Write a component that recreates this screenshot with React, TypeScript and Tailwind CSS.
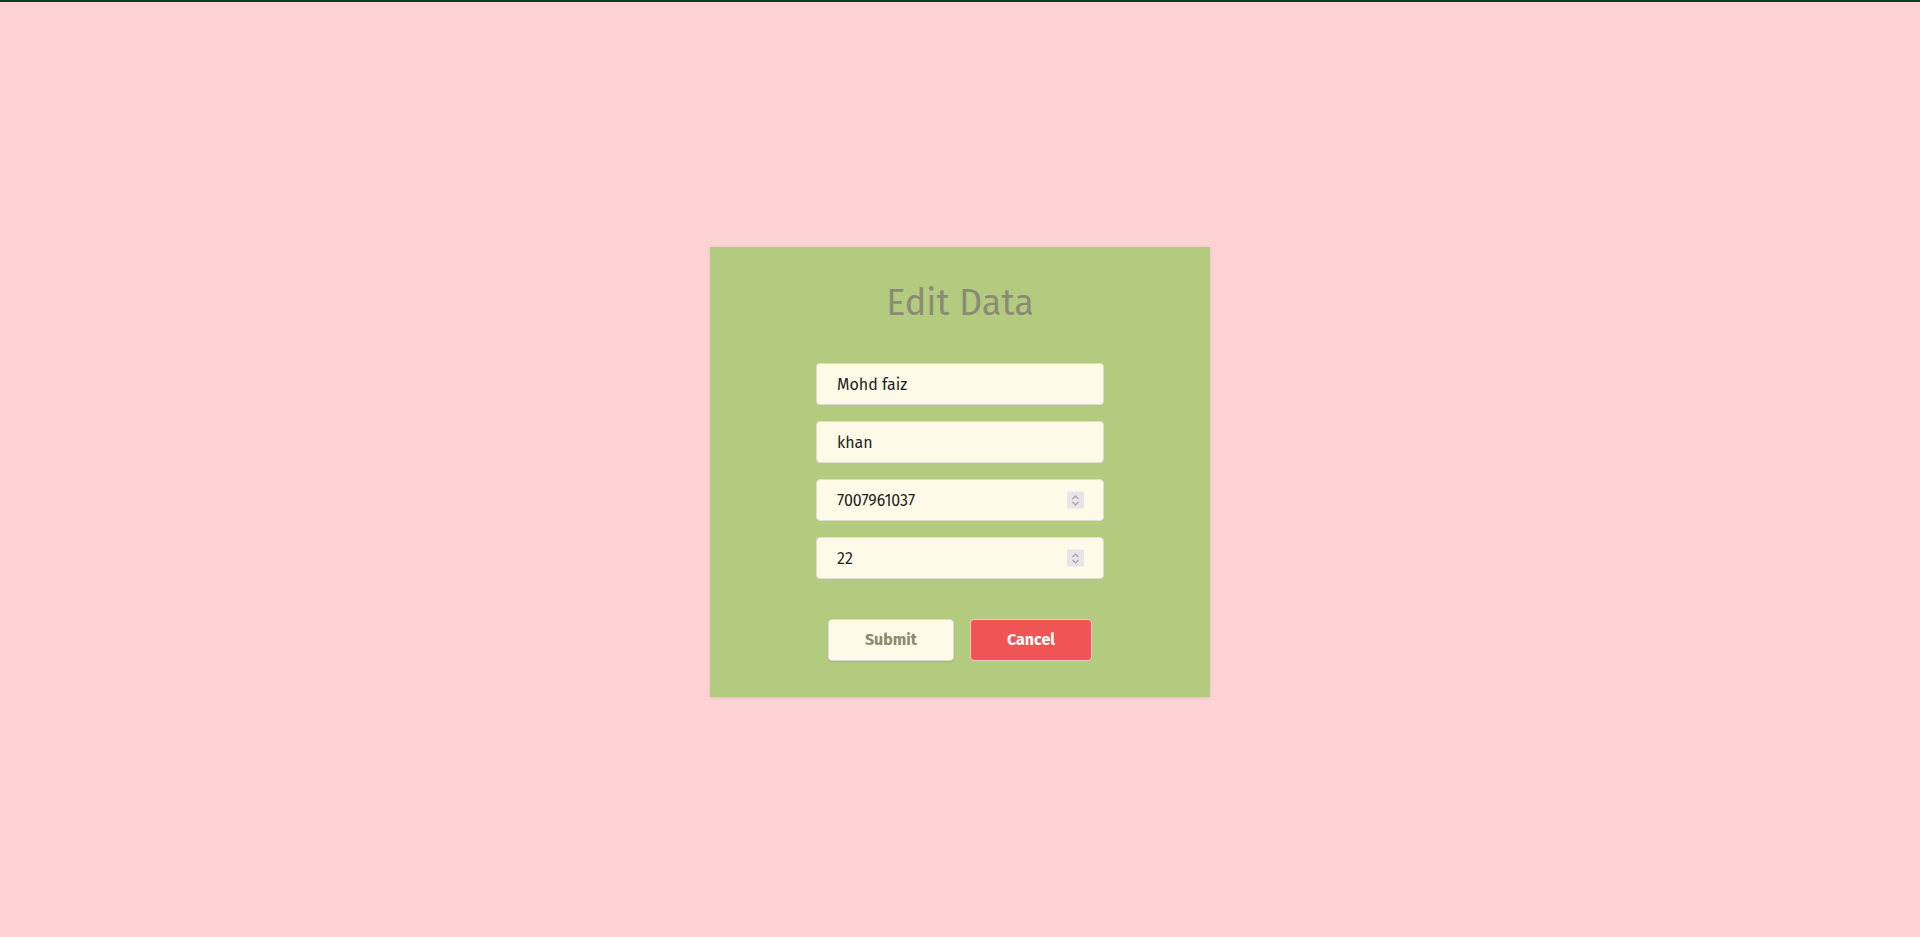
import React, { useState } from 'react';

const Spinner = () => (
  <span className="pointer-events-none absolute right-[20px] top-1/2 -translate-y-1/2 w-[17px] h-[17px] bg-[#e8e5e8] flex items-center justify-center">
    <svg width="9" height="12" viewBox="0 0 9 12" fill="none" stroke="#a19da3" strokeWidth="1.2">
      <path d="M1.5 4.5 L4.5 1.5 L7.5 4.5" />
      <path d="M1.5 7.5 L4.5 10.5 L7.5 7.5" />
    </svg>
  </span>
);

const EditData = () => {
  const [firstName, setFirstName] = useState('Mohd faiz');
  const [lastName, setLastName] = useState('khan');
  const [phone, setPhone] = useState('7007961037');
  const [age, setAge] = useState('22');

  const inputClass =
    'w-[288px] h-[42px] px-5 rounded bg-[#fefae7] border border-[#dcdcd0] text-[16px] text-[#1f1f1f] outline-none';
  const numberClass =
    inputClass +
    ' [appearance:textfield] [&::-webkit-inner-spin-button]:appearance-none [&::-webkit-outer-spin-button]:appearance-none';

  return (
    <div
      className="min-h-screen bg-[#ffd3d4] border-t-2 border-[#0b3d1e] pt-[5px] flex items-center justify-center"
      style={{ fontFamily: '"Fira Sans", Lato, "Open Sans", sans-serif' }}
    >
      <div className="w-[500px] h-[450px] bg-[#b2cb7e] shadow-[0_1px_3px_rgba(0,0,0,0.12)] flex flex-col items-center pt-[32px]">
        <h1 className="text-[36px] leading-[48px] text-[#8b8a77]">Edit Data</h1>

        <form className="mt-[36px] flex flex-col items-center gap-4" onSubmit={(e) => e.preventDefault()}>
          <input className={inputClass} type="text" value={firstName} onChange={(e) => setFirstName(e.target.value)} />
          <input className={inputClass} type="text" value={lastName} onChange={(e) => setLastName(e.target.value)} />
          <div className="relative">
            <input className={numberClass} type="number" value={phone} onChange={(e) => setPhone(e.target.value)} />
            <Spinner />
          </div>
          <div className="relative">
            <input className={numberClass} type="number" value={age} onChange={(e) => setAge(e.target.value)} />
            <Spinner />
          </div>

          <div className="mt-6 flex gap-4">
            <button
              type="submit"
              className="w-[126px] h-[42px] rounded bg-[#fefae7] border border-[#dcdcd0] shadow-[0_1px_2px_rgba(0,0,0,0.1)] text-[16px] font-bold text-[#8b8a6c]"
            >
              Submit
            </button>
            <button
              type="button"
              className="w-[122px] h-[42px] rounded bg-[#f05454] border border-[#f6c9c9] text-[16px] font-bold text-white"
            >
              Cancel
            </button>
          </div>
        </form>
      </div>
    </div>
  );
};

export default function App() {
  return <EditData />;
}
